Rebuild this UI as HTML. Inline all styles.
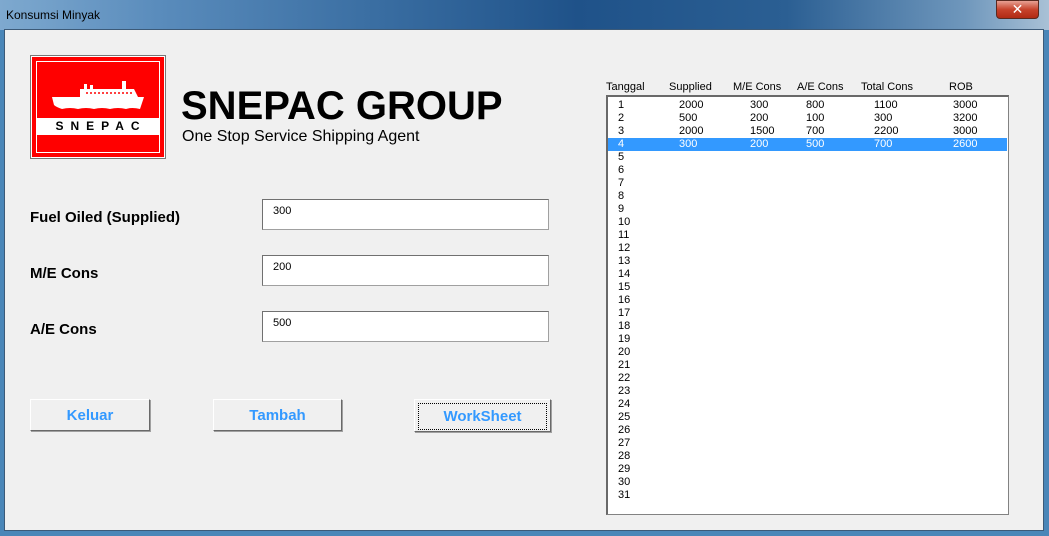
<!DOCTYPE html><html><head><style>
*{margin:0;padding:0;box-sizing:border-box}
body{width:1049px;height:536px;overflow:hidden;font-family:"Liberation Sans","DejaVu Sans",sans-serif;background:#4a86b8;position:relative}
.a{position:absolute}
.title{left:0;top:0;width:1049px;height:30px;background:linear-gradient(90deg,#7ea9cf 0%,#5a8cbc 15%,#3b6fa3 35%,#1f5289 55%,#2b5f93 75%,#6f97bc 92%,#a9c1d6 100%)}
.client{left:4px;top:29px;width:1040px;height:502px;background:#f0f0f0;border:1px solid #3c5a78}
.lbl{font-weight:bold;font-size:15px;color:#000}
.tb{background:#fff;border:1px solid #a0a0a0;border-top-color:#707070;border-left-color:#707070;width:287px;height:31px;font-size:11px;padding:5px 0 0 10px}
.btn{background:#f0f0f0;border:1px solid;border-color:#fff #696969 #696969 #fff;box-shadow:1px 1px 0 #a0a0a0;color:#3399ff;font-weight:bold;font-size:15px;text-align:center;line-height:32px;height:32px}
.list{left:606px;top:95px;width:403px;height:420px;background:#fff;border:1px solid #828282;border-top:2px solid #696969;border-left:2px solid #696969}
.row{position:absolute;left:0;width:399px;height:13px;font-size:11px;line-height:13px}
.row span{position:absolute}
.hd{font-size:11px;top:81px}
</style></head><body>
<div class="a title"></div>
<div class="a" style="left:6px;top:8px;font-size:12px;color:#000">Konsumsi Minyak</div>
<div class="a" style="left:996px;top:0;width:43px;height:19px;border-radius:0 0 4px 4px;background:linear-gradient(#e8a093,#c7432c 50%,#b02a14);border:1px solid #5a2a20;color:#fff;font-weight:bold;font-size:14px;text-align:center;line-height:17px">✕</div>
<div class="a client"></div>
<div class="a" style="left:30px;top:55px;width:136px;height:104px;border:1px solid #777;background:#fff;padding:1px">
 <div style="width:132px;height:100px;background:#f00;position:relative">
  <div class="a" style="left:4px;top:4px;width:124px;height:92px;border:1px solid #fff"></div>
  <div class="a" style="left:5px;top:61px;width:122px;height:17px;background:#fff;font-weight:bold;font-size:12px;letter-spacing:7px;text-align:center;line-height:17px;padding-left:6px">SNEPAC</div>
  <svg class="a" style="left:20px;top:24px" width="94" height="32" viewBox="0 0 94 32"><path d="M0 16 L92 16 L88 28 Q80 26 74 28 Q66 26 58 28 Q50 26 42 28 Q34 26 26 28 Q18 26 10 28 Q4 26 2 24Z M28 16 L28 8 L82 8 L86 16Z M32 8 L32 3 L35 3 L35 8 M38 8 L38 4 L41 4 L41 8 M70 8 L70 0 L74 0 L74 8Z" fill="#fff"/><path d="M34 12 H80" stroke="#f00" stroke-width="1.5" stroke-dasharray="2 2"/></svg>
 </div>
</div>
<div class="a" style="left:181px;top:84px;font-size:40px;font-weight:bold">SNEPAC GROUP</div>
<div class="a" style="left:182px;top:128px;font-size:16px">One Stop Service Shipping Agent</div>
<div class="a lbl" style="left:30px;top:209px">Fuel Oiled (Supplied)</div>
<div class="a lbl" style="left:30px;top:265px">M/E Cons</div>
<div class="a lbl" style="left:30px;top:321px">A/E Cons</div>
<div class="a tb" style="left:262px;top:199px">300</div>
<div class="a tb" style="left:262px;top:255px">200</div>
<div class="a tb" style="left:262px;top:311px">500</div>
<div class="a btn" style="left:30px;top:399px;width:120px">Keluar</div>
<div class="a btn" style="left:213px;top:399px;width:129px">Tambah</div>
<div class="a btn" style="left:414px;top:399px;width:137px;height:33px"><div style="margin:3px;border:1px dotted #000;line-height:25px">WorkSheet</div></div>
<div class="a hd" style="left:606px">Tanggal</div>
<div class="a hd" style="left:669px">Supplied</div>
<div class="a hd" style="left:733px">M/E Cons</div>
<div class="a hd" style="left:797px">A/E Cons</div>
<div class="a hd" style="left:861px">Total Cons</div>
<div class="a hd" style="left:949px">ROB</div>
<div class="a list">
<div class="row" style="top:2px"><span style="left:10px">1</span><span style="left:71px">2000</span><span style="left:142px">300</span><span style="left:198px">800</span><span style="left:266px">1100</span><span style="left:345px">3000</span></div>
<div class="row" style="top:15px"><span style="left:10px">2</span><span style="left:71px">500</span><span style="left:142px">200</span><span style="left:198px">100</span><span style="left:266px">300</span><span style="left:345px">3200</span></div>
<div class="row" style="top:28px"><span style="left:10px">3</span><span style="left:71px">2000</span><span style="left:142px">1500</span><span style="left:198px">700</span><span style="left:266px">2200</span><span style="left:345px">3000</span></div>
<div class="row" style="top:41px;background:#3399ff;color:#fff"><span style="left:10px">4</span><span style="left:71px">300</span><span style="left:142px">200</span><span style="left:198px">500</span><span style="left:266px">700</span><span style="left:345px">2600</span></div>
<div class="row" style="top:54px"><span style="left:10px">5</span></div>
<div class="row" style="top:67px"><span style="left:10px">6</span></div>
<div class="row" style="top:80px"><span style="left:10px">7</span></div>
<div class="row" style="top:93px"><span style="left:10px">8</span></div>
<div class="row" style="top:106px"><span style="left:10px">9</span></div>
<div class="row" style="top:119px"><span style="left:10px">10</span></div>
<div class="row" style="top:132px"><span style="left:10px">11</span></div>
<div class="row" style="top:145px"><span style="left:10px">12</span></div>
<div class="row" style="top:158px"><span style="left:10px">13</span></div>
<div class="row" style="top:171px"><span style="left:10px">14</span></div>
<div class="row" style="top:184px"><span style="left:10px">15</span></div>
<div class="row" style="top:197px"><span style="left:10px">16</span></div>
<div class="row" style="top:210px"><span style="left:10px">17</span></div>
<div class="row" style="top:223px"><span style="left:10px">18</span></div>
<div class="row" style="top:236px"><span style="left:10px">19</span></div>
<div class="row" style="top:249px"><span style="left:10px">20</span></div>
<div class="row" style="top:262px"><span style="left:10px">21</span></div>
<div class="row" style="top:275px"><span style="left:10px">22</span></div>
<div class="row" style="top:288px"><span style="left:10px">23</span></div>
<div class="row" style="top:301px"><span style="left:10px">24</span></div>
<div class="row" style="top:314px"><span style="left:10px">25</span></div>
<div class="row" style="top:327px"><span style="left:10px">26</span></div>
<div class="row" style="top:340px"><span style="left:10px">27</span></div>
<div class="row" style="top:353px"><span style="left:10px">28</span></div>
<div class="row" style="top:366px"><span style="left:10px">29</span></div>
<div class="row" style="top:379px"><span style="left:10px">30</span></div>
<div class="row" style="top:392px"><span style="left:10px">31</span></div>
</div>
</body></html>
